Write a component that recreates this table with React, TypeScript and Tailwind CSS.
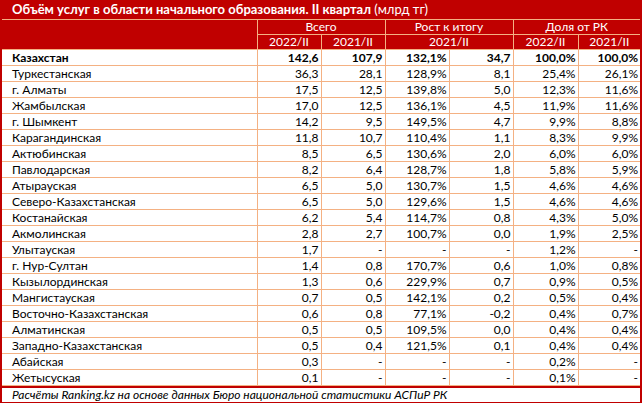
import React from 'react';

type Row = [string, string, string, string, string, string, string];

const rows: Row[] = [
  ['Туркестанская', '36,3', '28,1', '128,9%', '8,1', '25,4%', '26,1%'],
  ['г. Алматы', '17,5', '12,5', '139,8%', '5,0', '12,3%', '11,6%'],
  ['Жамбылская', '17,0', '12,5', '136,1%', '4,5', '11,9%', '11,6%'],
  ['г. Шымкент', '14,2', '9,5', '149,5%', '4,7', '9,9%', '8,8%'],
  ['Карагандинская', '11,8', '10,7', '110,4%', '1,1', '8,3%', '9,9%'],
  ['Актюбинская', '8,5', '6,5', '130,6%', '2,0', '6,0%', '6,0%'],
  ['Павлодарская', '8,2', '6,4', '128,7%', '1,8', '5,8%', '5,9%'],
  ['Атырауская', '6,5', '5,0', '130,7%', '1,5', '4,6%', '4,6%'],
  ['Северо-Казахстанская', '6,5', '5,0', '129,6%', '1,5', '4,6%', '4,6%'],
  ['Костанайская', '6,2', '5,4', '114,7%', '0,8', '4,3%', '5,0%'],
  ['Акмолинская', '2,8', '2,7', '100,7%', '0,0', '1,9%', '2,5%'],
  ['Улытауская', '1,7', '-', '-', '-', '1,2%', '-'],
  ['г. Нур-Султан', '1,4', '0,8', '170,7%', '0,6', '1,0%', '0,8%'],
  ['Кызылординская', '1,3', '0,6', '229,9%', '0,7', '0,9%', '0,5%'],
  ['Мангистауская', '0,7', '0,5', '142,1%', '0,2', '0,5%', '0,4%'],
  ['Восточно-Казахстанская', '0,6', '0,8', '77,1%', '-0,2', '0,4%', '0,7%'],
  ['Алматинская', '0,5', '0,5', '109,5%', '0,0', '0,4%', '0,4%'],
  ['Западно-Казахстанская', '0,5', '0,4', '121,5%', '0,1', '0,4%', '0,4%'],
  ['Абайская', '0,3', '-', '-', '-', '0,2%', '-'],
  ['Жетысуская', '0,1', '-', '-', '-', '0,1%', '-'],
];

const total: Row = ['Казахстан', '142,6', '107,9', '132,1%', '34,7', '100,0%', '100,0%'];

function DataRow({ row, bold }: { row: Row; bold?: boolean }) {
  return (
    <tr className={bold ? 'h-[16px] font-bold' : 'h-[16px]'}>
      <td className="border border-[#f4b183] border-l-0 pl-[10px] leading-[15px]">{row[0]}</td>
      {row.slice(1).map((v, i) => (
        <td
          key={i}
          className={
            'border border-[#f4b183] pr-[2px] text-right leading-[15px]' + (i === 5 ? ' border-r-0' : '')
          }
        >
          {v}
        </td>
      ))}
    </tr>
  );
}

export default function App() {
  return (
    <div className="w-[642px] h-[403px] bg-white overflow-hidden" style={{ fontFamily: 'Lato, "Noto Sans", sans-serif' }}>
      <div className="border-x-2 border-b-2 border-[#c00000] text-[12px] text-black">
        <table className="w-[638px] table-fixed border-collapse">
          <colgroup>
            <col className="w-[255px]" />
            <col className="w-[64px]" />
            <col className="w-[64px]" />
            <col className="w-[64px]" />
            <col className="w-[64px]" />
            <col className="w-[65px]" />
            <col className="w-[62px]" />
          </colgroup>
          <thead className="bg-[#c00000] text-white">
            <tr className="h-[19px]">
              <th colSpan={7} className="pl-[10px] text-left font-normal text-[13px] leading-[18px] border-b border-[#f4b183]">
                <span className="font-bold">Объём услуг в области начального образования. II квартал</span> (млрд тг)
              </th>
            </tr>
            <tr className="h-[15px] font-normal">
              <th rowSpan={2} className="border-r border-[#f4b183]" />
              <th colSpan={2} className="border border-[#f4b183] font-normal leading-[14px]">Всего</th>
              <th colSpan={2} className="border border-[#f4b183] font-normal leading-[14px]">Рост к итогу</th>
              <th colSpan={2} className="border border-[#f4b183] border-r-0 font-normal leading-[14px]">Доля от РК</th>
            </tr>
            <tr className="h-[15px]">
              <th className="border border-[#f4b183] font-normal leading-[14px]">2022/II</th>
              <th className="border border-[#f4b183] font-normal leading-[14px]">2021/II</th>
              <th colSpan={2} className="border border-[#f4b183] font-normal leading-[14px]">2021/II</th>
              <th className="border border-[#f4b183] font-normal leading-[14px]">2022/II</th>
              <th className="border border-[#f4b183] border-r-0 font-normal leading-[14px]">2021/II</th>
            </tr>
          </thead>
          <tbody>
            <DataRow row={total} bold />
            {rows.map((r) => (
              <DataRow key={r[0]} row={r} />
            ))}
          </tbody>
        </table>
        <div className="h-[16px] border-t-2 border-[#c00000] pl-[10px] italic leading-[14px]">
          Расчёты Ranking.kz на основе данных Бюро национальной статистики АСПиР РК
        </div>
      </div>
    </div>
  );
}
